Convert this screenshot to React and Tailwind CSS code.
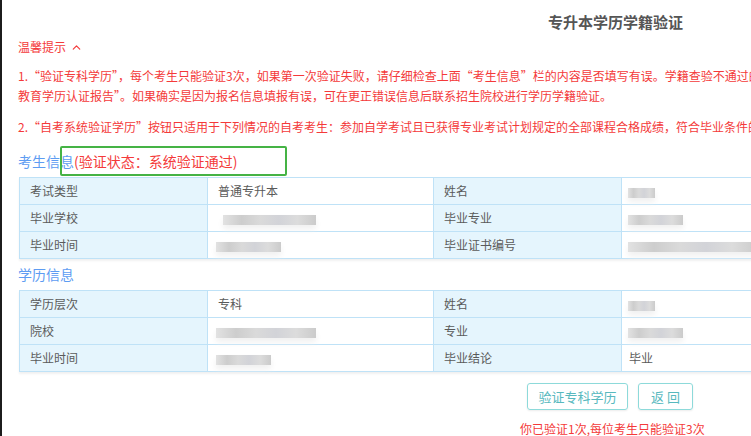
import React from 'react';
import { ChevronUp } from 'lucide-react';

function Blur({ w }) {
    // mosaic placeholder for masked personal data
    return (
        <span className={`inline-block align-middle h-[10px] ${w} bg-[linear-gradient(90deg,#e2e2e2,#cdcdcd_20%,#dadada_40%,#d2d3d8_60%,#dcdcdc_80%,#cbcbcb)] blur-[0.7px] shadow-[0_4px_6px_rgba(240,240,240,1)]`} />
    );
}

function InfoTable({ rows }) {
    return (
        <table className="ml-[1px] w-[828px] border-collapse table-fixed text-[12px] text-[#5a5a5a] shadow-[0_2px_2px_rgba(0,0,0,0.06)]">
            <colgroup>
                <col className="w-[188px]" />
                <col className="w-[226px]" />
                <col className="w-[188px]" />
                <col className="w-[226px]" />
            </colgroup>
            <tbody>
                {rows.map((r, i) => (
                    <tr key={i} className="h-[27px]">
                        <td className="border border-[#bfe2f7] bg-[#e5f5fd] pl-[10px]">{r[0]}</td>
                        <td className="border border-[#bfe2f7] bg-white pl-[8px]">{r[1]}</td>
                        <td className="border border-[#bfe2f7] bg-[#e5f5fd] pl-[10px]">{r[2]}</td>
                        <td className="border border-[#bfe2f7] bg-white pl-[6px]">{r[3]}</td>
                    </tr>
                ))}
            </tbody>
        </table>
    );
}

export default function App() {
    const student = [
        ['考试类型', <span className="pl-[2px]">普通专升本</span>, '姓名', <Blur w="w-[27px]" />],
        ['毕业学校', <span className="pl-[7px]"><Blur w="w-[93px]" /></span>, '毕业专业', <Blur w="w-[55px]" />],
        ['毕业时间', <Blur w="w-[65px]" />, '毕业证书编号', <Blur w="w-[130px]" />],
    ];
    const edu = [
        ['学历层次', <span className="pl-[2px]">专科</span>, '姓名', <Blur w="w-[27px]" />],
        ['院校', <Blur w="w-[100px]" />, '专业', <Blur w="w-[55px]" />],
        ['毕业时间', <Blur w="w-[55px]" />, '毕业结论', <span className="pl-[1px]">毕业</span>],
    ];

    return (
        <div className="w-[751px] h-[436px] overflow-hidden bg-white border-l-2 border-[#1c1c1c] font-['Noto_Sans_CJK_SC','Noto_Sans',sans-serif]">
            <div className="w-[900px] pl-[16px]">
                <h1 className="h-[37px] pl-[530px] pt-[12px] text-[15px] leading-[20px] font-bold text-[#555]">专升本学历学籍验证</h1>

                {/* tips */}
                <div className="h-[20px] flex items-center gap-[4px] text-[12px] text-[#f43a3a]">
                    <span>温馨提示</span>
                    <ChevronUp size={13} strokeWidth={2.2} />
                </div>
                <div className="mt-[9px] text-[12px] leading-[20px] text-[#f43a3a] whitespace-nowrap">
                    <p>1.“验证专科学历”，每个考生只能验证3次，如果第一次验证失败，请仔细检查上面“考生信息”栏的内容是否填写有误。学籍查验不通过的考生，可申请《中国高等</p>
                    <p>教育学历认证报告”。如果确实是因为报名信息填报有误，可在更正错误信息后联系招生院校进行学历学籍验证。</p>
                    <p className="mt-[11px]">2.“自考系统验证学历”按钮只适用于下列情况的自考考生：参加自学考试且已获得专业考试计划规定的全部课程合格成绩，符合毕业条件的考生。</p>
                </div>

                {/* student info */}
                <div className="relative mt-[10px] h-[28px] flex items-center text-[14px]">
                    <span className="text-[#5d9cf2]">考生信息</span>
                    <span className="text-[#f43a3a]">(验证状态：系统验证通过)</span>
                    <div className="absolute left-[42px] top-[-1px] w-[227px] h-[30px] border-2 border-[#45b345] rounded-[2px]" />
                </div>
                <div className="mt-[2px]">
                    <InfoTable rows={student} />
                </div>

                {/* education info */}
                <div className="mt-[5px] h-[20px] flex items-center text-[14px] text-[#5d9cf2]">学历信息</div>
                <div className="mt-[6px]">
                    <InfoTable rows={edu} />
                </div>

                <div className="mt-[11px] pl-[509px] flex gap-[10px]">
                    <button className="w-[101px] h-[27px] border border-[#8ddada] rounded-[3px] text-[13px] text-[#58b9be] shadow-[0_1px_2px_rgba(0,0,0,0.08)]">验证专科学历</button>
                    <button className="w-[55px] h-[27px] border border-[#8ddada] rounded-[3px] text-[13px] text-[#58b9be] shadow-[0_1px_2px_rgba(0,0,0,0.08)]">返 回</button>
                </div>
                <p className="mt-[11px] pl-[502px] text-[12px] leading-[16px] text-[#f43a3a]">你已验证1次,每位考生只能验证3次</p>
            </div>
        </div>
    );
}
